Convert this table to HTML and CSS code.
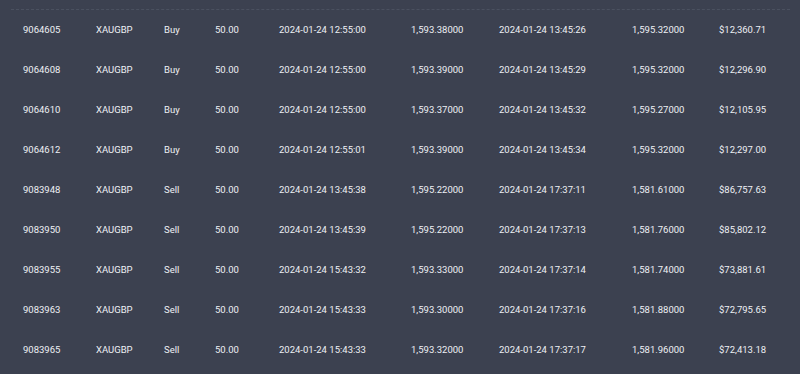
FILE: index.html
```html
<!DOCTYPE html>
<html>
<head>
<meta charset="utf-8">
<link rel="stylesheet" href="styles.css">
</head>
<body>
<div class="panel">
  <div class="rows">
    <div class="row"><span>9064605</span><span>XAUGBP</span><span>Buy</span><span>50.00</span><span>2024-01-24 12:55:00</span><span>1,593.38000</span><span>2024-01-24 13:45:26</span><span>1,595.32000</span><span>$12,360.71</span></div>
    <div class="row"><span>9064608</span><span>XAUGBP</span><span>Buy</span><span>50.00</span><span>2024-01-24 12:55:00</span><span>1,593.39000</span><span>2024-01-24 13:45:29</span><span>1,595.32000</span><span>$12,296.90</span></div>
    <div class="row"><span>9064610</span><span>XAUGBP</span><span>Buy</span><span>50.00</span><span>2024-01-24 12:55:00</span><span>1,593.37000</span><span>2024-01-24 13:45:32</span><span>1,595.27000</span><span>$12,105.95</span></div>
    <div class="row"><span>9064612</span><span>XAUGBP</span><span>Buy</span><span>50.00</span><span>2024-01-24 12:55:01</span><span>1,593.39000</span><span>2024-01-24 13:45:34</span><span>1,595.32000</span><span>$12,297.00</span></div>
    <div class="row"><span>9083948</span><span>XAUGBP</span><span>Sell</span><span>50.00</span><span>2024-01-24 13:45:38</span><span>1,595.22000</span><span>2024-01-24 17:37:11</span><span>1,581.61000</span><span>$86,757.63</span></div>
    <div class="row"><span>9083950</span><span>XAUGBP</span><span>Sell</span><span>50.00</span><span>2024-01-24 13:45:39</span><span>1,595.22000</span><span>2024-01-24 17:37:13</span><span>1,581.76000</span><span>$85,802.12</span></div>
    <div class="row"><span>9083955</span><span>XAUGBP</span><span>Sell</span><span>50.00</span><span>2024-01-24 15:43:32</span><span>1,593.33000</span><span>2024-01-24 17:37:14</span><span>1,581.74000</span><span>$73,881.61</span></div>
    <div class="row"><span>9083963</span><span>XAUGBP</span><span>Sell</span><span>50.00</span><span>2024-01-24 15:43:33</span><span>1,593.30000</span><span>2024-01-24 17:37:16</span><span>1,581.88000</span><span>$72,795.65</span></div>
    <div class="row"><span>9083965</span><span>XAUGBP</span><span>Sell</span><span>50.00</span><span>2024-01-24 15:43:33</span><span>1,593.32000</span><span>2024-01-24 17:37:17</span><span>1,581.96000</span><span>$72,413.18</span></div>
  </div>
</div>
</body>
</html>
```
FILE: styles.css
```css
html, body {
  margin: 0;
  padding: 0;
  background: #3c4150;
  height: 374px;
  overflow: hidden;
}
body {
  font-family: Roboto, "Noto Sans", sans-serif;
  font-size: 9.5px;
  color: #eef0f4;
}
.panel {
  padding-top: 9px;
  margin: 0 10px 0 11px;
}
.rows {
  border-top: 1px dashed #4b5160;
  padding-left: 12px;
}
.row {
  display: grid;
  grid-template-columns: 73px 68px 51px 64px 132px 88px 133px 87px 1fr;
  height: 40px;
  line-height: 40px;
  white-space: nowrap;
}
```
